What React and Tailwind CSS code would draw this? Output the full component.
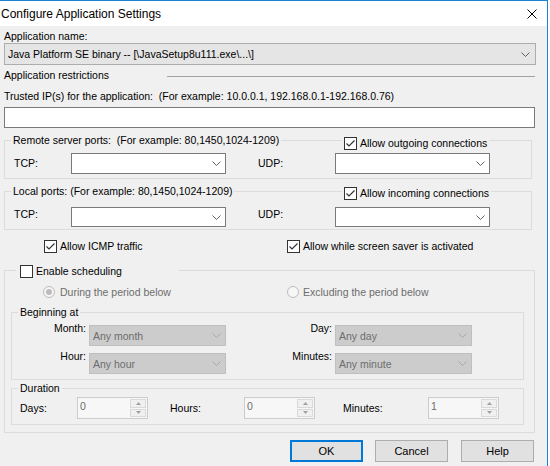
import React from 'react';

function Chevron({ color = '#606060' }) {
  return (
    <svg width="9" height="5" viewBox="0 0 9 5" className="shrink-0">
      <polyline points="0.5,0.5 4.5,4.5 8.5,0.5" fill="none" stroke={color} strokeWidth="1" />
    </svg>
  );
}

function Combo({ className = '', value = '', disabled }) {
  return (
    <div
      className={`flex items-center justify-between pl-[3px] pr-[4px] ${
        disabled ? 'border border-[#bfbfbf] bg-[#cccccc] text-[#6d6d6d]' : 'border border-[#7a7a7a] bg-white'
      } ${className}`}
    >
      <span className="whitespace-nowrap">{value}</span>
      <Chevron color={disabled ? '#a8a8a8' : '#606060'} />
    </div>
  );
}

function Check({ checked }) {
  return (
    <span className="flex h-[13px] w-[13px] shrink-0 items-center justify-center border border-[#333333] bg-white">
      {checked && (
        <svg width="11" height="11" viewBox="0 0 11 11">
          <polyline points="1.5,5.5 4,8 9.5,2.5" fill="none" stroke="#333333" strokeWidth="1.2" />
        </svg>
      )}
    </span>
  );
}

function Radio({ checked }) {
  return (
    <span className="flex h-[12px] w-[12px] shrink-0 items-center justify-center rounded-full border border-[#bcbcbc] bg-[#f7f7f7]">
      {checked && <span className="h-[6px] w-[6px] rounded-full bg-[#bcbcbc]" />}
    </span>
  );
}

function SpinBtn({ up }) {
  return (
    <span className="flex flex-1 items-center justify-center border border-[#d9d9d9] bg-[#f0f0f0]">
      <svg width="5" height="3" viewBox="0 0 5 3">
        <polygon points={up ? '0,3 2.5,0 5,3' : '0,0 2.5,3 5,0'} fill="#a0a0a0" />
      </svg>
    </span>
  );
}

function Spin({ value }) {
  return (
    <div className="flex h-[22px] w-[71px] shrink-0 border border-[#cccccc] bg-[#f7f7f7]">
      <span className="flex-1 pl-[2px] pt-[1px] text-[#6d6d6d]">{value}</span>
      <div className="flex w-[18px] flex-col gap-[1px] p-[1px]">
        <SpinBtn up />
        <SpinBtn />
      </div>
    </div>
  );
}

function Group({ title, className = '', children }) {
  return (
    <div className={`relative border border-[#dcdcdc] ${className}`}>
      {title && (
        <span className="absolute left-[6px] top-[-8px] whitespace-nowrap bg-[#f0f0f0] px-[2px]">{title}</span>
      )}
      {children}
    </div>
  );
}

function Btn({ children, primary, className = '' }) {
  return (
    <div
      className={`flex h-[22px] w-[73px] items-center justify-center bg-[#e1e1e1] text-[11px] ${
        primary ? 'border-2 border-[#0078d7]' : 'border border-[#adadad]'
      } ${className}`}
    >
      {children}
    </div>
  );
}

export default function App() {
  return (
    <div className="h-[466px] w-[550px] overflow-hidden bg-white font-['Liberation_Sans',Arial,sans-serif] text-[10.5px] leading-[14px] text-black">
      <div className="flex h-[466px] w-[548px] flex-col border-r border-t border-[#1883d7]">
        {/* Title bar */}
        <div className="flex h-[25px] shrink-0 items-center justify-between bg-white pl-[1px]">
          <span className="text-[12px]">Configure Application Settings</span>
          <svg width="10" height="10" viewBox="0 0 10 10" className="mr-[10px]">
            <path d="M0.5 0.5 L9.5 9.5 M9.5 0.5 L0.5 9.5" stroke="#000" strokeWidth="1" />
          </svg>
        </div>

        {/* Body */}
        <div className="flex-1 bg-[#f0f0f0] pl-[4px] pt-[3px]">
          <div className="h-[14px]">Application name:</div>
          <div className="flex h-[22px] w-[532px] items-center justify-between border border-[#adadad] bg-[#e5e5e5] pl-[3px] pr-[5px]">
            <span>Java Platform SE binary -- [\JavaSetup8u111.exe\...\]</span>
            <Chevron />
          </div>

          <div className="mt-[3px] flex h-[14px] w-[531px] items-start">
            <span className="w-[163px] shrink-0">Application restrictions</span>
            <div className="mt-[8px] grow border-t border-[#a0a0a0]" />
          </div>

          <div className="mt-[7px] h-[14px] whitespace-nowrap">
            Trusted IP(s) for the application:{'\u00a0\u00a0'}(For example: 10.0.0.1, 192.168.0.1-192.168.0.76)
          </div>
          <div className="mt-[4px] h-[21px] w-[531px] border border-[#7a7a7a] bg-white" />

          {/* Remote server ports */}
          <Group
            title={'Remote server ports:\u00a0\u00a0(For example: 80,1450,1024-1209)'}
            className="mt-[12px] w-[528px] pb-[4px] pt-[12px]"
          >
            <span className="absolute left-[337px] top-[-5px] flex items-center bg-[#f0f0f0] pl-[2px] pr-[2px]">
              <Check checked />
              <span className="ml-[3px] whitespace-nowrap">Allow outgoing connections</span>
            </span>
            <div className="flex items-center pl-[9px]">
              <span className="mt-[-2px] w-[57px] shrink-0">TCP:</span>
              <Combo className="h-[21px] w-[155px] shrink-0" />
              <span className="mt-[-2px] w-[109px] shrink-0 pl-[32px]">UDP:</span>
              <Combo className="h-[21px] w-[155px] shrink-0" />
            </div>
          </Group>

          {/* Local ports */}
          <Group
            title="Local ports: (For example: 80,1450,1024-1209)"
            className="mt-[12px] w-[528px] pb-[2px] pt-[15px]"
          >
            <span className="absolute left-[337px] top-[-6px] flex items-center bg-[#f0f0f0] pl-[2px] pr-[2px]">
              <Check checked />
              <span className="ml-[3px] whitespace-nowrap">Allow incoming connections</span>
            </span>
            <div className="flex items-center pl-[9px]">
              <span className="mt-[-6px] w-[57px] shrink-0">TCP:</span>
              <Combo className="h-[20px] w-[155px] shrink-0" />
              <span className="mt-[-6px] w-[109px] shrink-0 pl-[32px]">UDP:</span>
              <Combo className="h-[20px] w-[155px] shrink-0" />
            </div>
          </Group>

          <div className="mt-[9px] flex h-[14px] items-center pl-[40px]">
            <div className="flex w-[243px] shrink-0 items-center">
              <Check checked />
              <span className="ml-[3px]">Allow ICMP traffic</span>
            </div>
            <div className="flex items-center">
              <Check checked />
              <span className="ml-[3px] whitespace-nowrap">Allow while screen saver is activated</span>
            </div>
          </div>

          {/* Scheduling */}
          <Group className="mt-[17px] w-[531px] pb-[7px] pt-[14px]">
            <span className="absolute left-[11px] top-[-7px] flex w-[163px] items-center bg-[#f0f0f0] pl-[4px]">
              <Check />
              <span className="ml-[3px]">Enable scheduling</span>
            </span>

            <div className="flex h-[14px] items-center pl-[38px] text-[#6d6d6d]">
              <div className="flex w-[244px] shrink-0 items-center">
                <Radio checked />
                <span className="ml-[5px]">During the period below</span>
              </div>
              <div className="flex items-center">
                <Radio />
                <span className="ml-[4px]">Excluding the period below</span>
              </div>
            </div>

            <Group title="Beginning at" className="ml-[6px] mt-[13px] w-[513px] pb-[5px] pt-[12px]">
              <div className="flex h-[21px] items-start">
                <span className="mt-[-4px] w-[74px] shrink-0 text-right">Month:</span>
                <Combo disabled value="Any month" className="ml-[3px] h-[21px] w-[137px] shrink-0" />
                <span className="mt-[-4px] w-[106px] shrink-0 text-right">Day:</span>
                <Combo disabled value="Any day" className="ml-[3px] h-[21px] w-[137px] shrink-0" />
              </div>
              <div className="mt-[7px] flex h-[21px] items-start">
                <span className="mt-[-4px] w-[74px] shrink-0 text-right">Hour:</span>
                <Combo disabled value="Any hour" className="ml-[3px] h-[21px] w-[137px] shrink-0" />
                <span className="mt-[-4px] w-[106px] shrink-0 text-right">Minutes:</span>
                <Combo disabled value="Any minute" className="ml-[3px] h-[21px] w-[137px] shrink-0" />
              </div>
            </Group>

            <Group title="Duration" className="ml-[6px] mt-[8px] w-[513px] pb-[5px] pt-[8px]">
              <div className="flex h-[22px] items-center">
                <span className="w-[65px] shrink-0 pl-[8px]">Days:</span>
                <Spin value="0" />
                <span className="w-[96px] shrink-0 pl-[22px]">Hours:</span>
                <Spin value="0" />
                <span className="w-[113px] shrink-0 pl-[28px]">Minutes:</span>
                <Spin value="1" />
              </div>
            </Group>
          </Group>

          {/* Buttons */}
          <div className="mt-[7px] flex pl-[286px]">
            <Btn primary>OK</Btn>
            <Btn className="ml-[12px]">Cancel</Btn>
            <Btn className="ml-[13px]">Help</Btn>
          </div>
        </div>
      </div>
    </div>
  );
}
